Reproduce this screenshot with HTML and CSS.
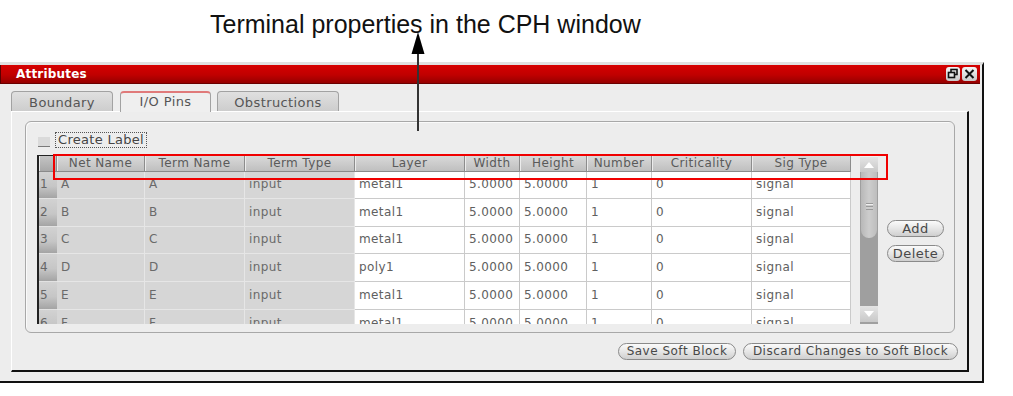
FILE: index.html
```html
<!DOCTYPE html>
<html lang="en">
<head>
  <meta charset="UTF-8" />
  <title>Attributes - I/O Pins</title>
  <link rel="stylesheet" href="styles.css">
</head>
<body>
  <div class="figure">
    <div class="caption">Terminal properties in the CPH window</div>

    <div class="window">
      <div class="titlebar">
        <span class="title">Attributes</span>
        <div class="win-btns">
          <span class="win-btn">
            <svg width="14" height="14" viewBox="0 0 14 14">
              <rect x="5" y="2.5" width="6" height="5" fill="none" stroke="#111" stroke-width="1.6"/>
              <rect x="2.5" y="5.5" width="6" height="5" fill="#e6e6e6" stroke="#111" stroke-width="1.6"/>
            </svg>
          </span>
          <span class="win-btn close">
            <svg width="15" height="14" viewBox="0 0 15 14">
              <path d="M3.5 3 L11.5 11 M11.5 3 L3.5 11" stroke="#111" stroke-width="2"/>
            </svg>
          </span>
        </div>
      </div>

      <div class="tabs">
        <div class="tab tab-boundary">Boundary</div>
        <div class="tab tab-pins active">I/O Pins</div>
        <div class="tab tab-obs">Obstructions</div>
      </div>

      <div class="pane">
        <div class="group">
          <div class="check-row">
            <span class="checkbox"></span>
            <span class="check-label">Create Label</span>
          </div>

          <div class="table-row">
            <div class="table-view">
              <div class="grid">
                <div class="hd corner"></div>
                <div class="hd">Net Name</div>
                <div class="hd">Term Name</div>
                <div class="hd">Term Type</div>
                <div class="hd">Layer</div>
                <div class="hd">Width</div>
                <div class="hd">Height</div>
                <div class="hd">Number</div>
                <div class="hd">Criticality</div>
                <div class="hd">Sig Type</div>

                <div class="rh">1</div><div class="ro">A</div><div class="ro">A</div><div class="ro">input</div>
                <div class="c">metal1</div><div class="c">5.0000</div><div class="c">5.0000</div><div class="c">1</div><div class="c">0</div><div class="c">signal</div>

                <div class="rh">2</div><div class="ro">B</div><div class="ro">B</div><div class="ro">input</div>
                <div class="c">metal1</div><div class="c">5.0000</div><div class="c">5.0000</div><div class="c">1</div><div class="c">0</div><div class="c">signal</div>

                <div class="rh">3</div><div class="ro">C</div><div class="ro">C</div><div class="ro">input</div>
                <div class="c">metal1</div><div class="c">5.0000</div><div class="c">5.0000</div><div class="c">1</div><div class="c">0</div><div class="c">signal</div>

                <div class="rh">4</div><div class="ro">D</div><div class="ro">D</div><div class="ro">input</div>
                <div class="c">poly1</div><div class="c">5.0000</div><div class="c">5.0000</div><div class="c">1</div><div class="c">0</div><div class="c">signal</div>

                <div class="rh">5</div><div class="ro">E</div><div class="ro">E</div><div class="ro">input</div>
                <div class="c">metal1</div><div class="c">5.0000</div><div class="c">5.0000</div><div class="c">1</div><div class="c">0</div><div class="c">signal</div>

                <div class="rh">6</div><div class="ro">F</div><div class="ro">F</div><div class="ro">input</div>
                <div class="c">metal1</div><div class="c">5.0000</div><div class="c">5.0000</div><div class="c">1</div><div class="c">0</div><div class="c">signal</div>
              </div>
            </div>

            <div class="scrollbar">
              <div class="sb-btn sb-up"><span class="tri-up"></span></div>
              <div class="sb-thumb"><span class="grip"></span></div>
              <div class="sb-track"></div>
              <div class="sb-btn sb-down"><span class="tri-down"></span></div>
            </div>

            <div class="side-btns">
              <button class="pill side">Add</button>
              <button class="pill side">Delete</button>
            </div>
          </div>
        </div>

        <div class="footer-btns">
          <button class="pill save">Save Soft Block</button>
          <button class="pill discard">Discard Changes to Soft Block</button>
        </div>
      </div>
    </div>

    <!-- annotation overlays -->
    <svg class="arrow" width="22" height="102" viewBox="0 0 22 102">
      <line x1="11" y1="22" x2="11" y2="101" stroke="#333" stroke-width="2"/>
      <polygon points="11,2 4.5,24 17.5,24" fill="#000"/>
    </svg>
    <div class="highlight"></div>
  </div>
</body>
</html>
```

FILE: styles.css
```css
body {
  margin: 0;
  background: #fff;
}
.figure {
  position: relative;
  width: 1013px;
  height: 396px;
  overflow: hidden;
  font-family: "DejaVu Sans", sans-serif;
}
.caption {
  box-sizing: border-box;
  height: 62px;
  padding: 10px 0 0 210px;
  font-family: "Liberation Sans", Arial, sans-serif;
  font-size: 25px;
  line-height: 29px;
  color: #111;
}

/* window frame */
.window {
  box-sizing: border-box;
  width: 984px;
  height: 321px;
  background: #ededed;
  border-top: 3px solid #e0e0e0;
  border-right: 2px solid #111;
  border-bottom: 2px solid #111;
}
.titlebar {
  display: flex;
  align-items: center;
  justify-content: space-between;
  box-sizing: border-box;
  height: 19px;
  margin-right: 2px;
  padding: 0 3px 0 15px;
  background: linear-gradient(#d60000, #c00000 55%, #960000);
  border-left: 1px solid #5a0000;
  border-bottom: 1px solid #6a0000;
}
.title {
  color: #fff;
  font-size: 12px;
  font-weight: bold;
  letter-spacing: 0.2px;
}
.win-btns {
  display: flex;
  gap: 2px;
}
.win-btn {
  display: flex;
  width: 14px;
  height: 14px;
  border-radius: 3px;
  background: linear-gradient(#f4f4f4, #c9c9c9);
}
.win-btn.close {
  width: 15px;
}

/* tabs */
.tabs {
  display: flex;
  align-items: flex-end;
  height: 20px;
  margin-top: 7px;
  padding-left: 11px;
}
.tab {
  box-sizing: border-box;
  height: 20px;
  padding-top: 2px;
  border: 1px solid #a2a2a2;
  border-bottom: none;
  border-radius: 4px 4px 0 0;
  background: linear-gradient(#e0e0e0, #cdcdcd);
  color: #555;
  font-size: 13px;
  line-height: 17px;
  text-align: center;
  letter-spacing: 0.4px;
}
.tab-boundary { width: 102px; margin-right: 7px; }
.tab-pins { width: 91px; margin-right: 6px; }
.tab-obs { width: 122px; }
.tab.active {
  height: 21px;
  margin-bottom: -1px;
  position: relative;
  border-top: 2px solid #e07a7a;
  background: #efefef;
  padding-top: 0;
}

/* tab pane */
.pane {
  box-sizing: border-box;
  width: 958px;
  height: 261px;
  margin-left: 11px;
  border-top: 1px solid #fff;
  border-left: 1px solid #fff;
  border-right: 2px solid #111;
  border-bottom: 2px solid #111;
}
.group {
  box-sizing: border-box;
  width: 930px;
  height: 212px;
  margin: 9px 0 0 13px;
  padding: 10px 0 0 11px;
  border: 1px solid #a8a8a8;
  border-radius: 6px;
  box-shadow: inset 1px 1px 0 #fafafa;
}
.check-row {
  display: flex;
  align-items: center;
  height: 16px;
  margin-bottom: 7px;
}
.checkbox {
  box-sizing: border-box;
  width: 12px;
  height: 10px;
  margin: 3px 5px 0 1px;
  background: #dadada;
  border-bottom: 1px solid #7a7a7a;
}
.check-label {
  box-sizing: border-box;
  height: 16px;
  padding: 0 2px;
  border: 1px dotted #555;
  color: #444;
  font-size: 13px;
  line-height: 14px;
  letter-spacing: 0.3px;
}

/* table */
.table-row {
  display: flex;
  align-items: flex-start;
}
.table-view {
  box-sizing: border-box;
  width: 814px;
  height: 169px;
  overflow: hidden;
  border-top: 1px solid #222;
  border-left: 2px solid #222;
  background: #e4e4e4;
}
.grid {
  display: grid;
  grid-template-columns: 18px 88px 100px 110px 110px 55px 67px 65px 100px 99px;
  grid-template-rows: 16px 27px 28px 27px 28px 28px 28px;
  font-size: 12px;
  letter-spacing: 0.4px;
}
.grid > div {
  box-sizing: border-box;
  white-space: nowrap;
  overflow: hidden;
}
.hd {
  background: linear-gradient(#d9d9d9, #bfbfbf);
  border-right: 1px solid #8c8c8c;
  border-bottom: 1px solid #8a8a8a;
  box-shadow: inset 1px 0 0 #ececec;
  color: #5a5a5a;
  line-height: 15px;
  text-align: center;
}
.hd.corner {
  background: linear-gradient(#c4c4c4, #a8a8a8);
}
.rh, .ro, .c {
  display: flex;
  align-items: center;
  padding: 0 0 2px 4px;
}
.rh {
  padding-left: 1px;
  background: linear-gradient(#d2d2d2, #c6c6c6 55%, #a4a4a4);
  border-bottom: 1px solid #e2e2e2;
  color: #666;
}
.ro {
  background: #d6d6d6;
  border-right: 1px solid #e6e6e6;
  border-bottom: 1px solid #e6e6e6;
  color: #6a6a6a;
}
.c {
  background: #fff;
  border-right: 1px solid #cacaca;
  border-bottom: 1px solid #cacaca;
  color: #606060;
}

/* scrollbar */
.scrollbar {
  display: flex;
  flex-direction: column;
  width: 18px;
  height: 169px;
  margin-left: 9px;
  background: #9f9f9f;
}
.sb-btn {
  display: flex;
  align-items: center;
  justify-content: center;
  background: linear-gradient(#e4e4e4, #c8c8c8);
}
.sb-up { height: 17px; border-top: 2px solid #f2f2f2; box-sizing: border-box; }
.sb-down { height: 16px; margin-bottom: 2px; }
.tri-up {
  border-left: 5px solid transparent;
  border-right: 5px solid transparent;
  border-bottom: 6px solid #fff;
}
.tri-down {
  border-left: 5px solid transparent;
  border-right: 5px solid transparent;
  border-top: 6px solid #fff;
}
.sb-thumb {
  display: flex;
  justify-content: center;
  height: 66px;
  margin: 0 1px;
  border-radius: 0 0 8px 8px;
  background: linear-gradient(90deg, #b8b8b8, #cdcdcd 50%, #bdbdbd);
}
.grip {
  width: 7px;
  height: 5px;
  margin-top: 31px;
  border-top: 1px solid #9a9a9a;
  border-bottom: 1px solid #9a9a9a;
  box-shadow: inset 0 1px 0 #f0f0f0, inset 0 -2px 0 #cdcdcd, inset 0 -3px 0 #9a9a9a;
}
.sb-track {
  flex: 1;
}

/* buttons */
.pill {
  box-sizing: border-box;
  height: 17px;
  padding: 0;
  border: 1px solid #8a8a8a;
  border-radius: 9px;
  background: linear-gradient(#fbfbfb, #e6e6e6 50%, #cfcfcf);
  color: #484848;
  font-family: "DejaVu Sans", sans-serif;
  font-size: 12px;
  line-height: 15px;
  letter-spacing: 0.5px;
}
.side-btns {
  display: flex;
  flex-direction: column;
  gap: 8px;
  margin: 65px 0 0 9px;
}
.pill.side {
  width: 57px;
  font-size: 13px;
}
.footer-btns {
  display: flex;
  justify-content: flex-end;
  gap: 7px;
  margin-top: 10px;
  padding-right: 9px;
}
.pill.save { width: 118px; }
.pill.discard { width: 215px; }

/* annotation overlays */
.arrow {
  position: absolute;
  left: 407px;
  top: 30px;
}
.highlight {
  position: absolute;
  left: 53px;
  top: 154px;
  box-sizing: border-box;
  width: 835px;
  height: 26px;
  border: 2px solid #f00000;
}
```
